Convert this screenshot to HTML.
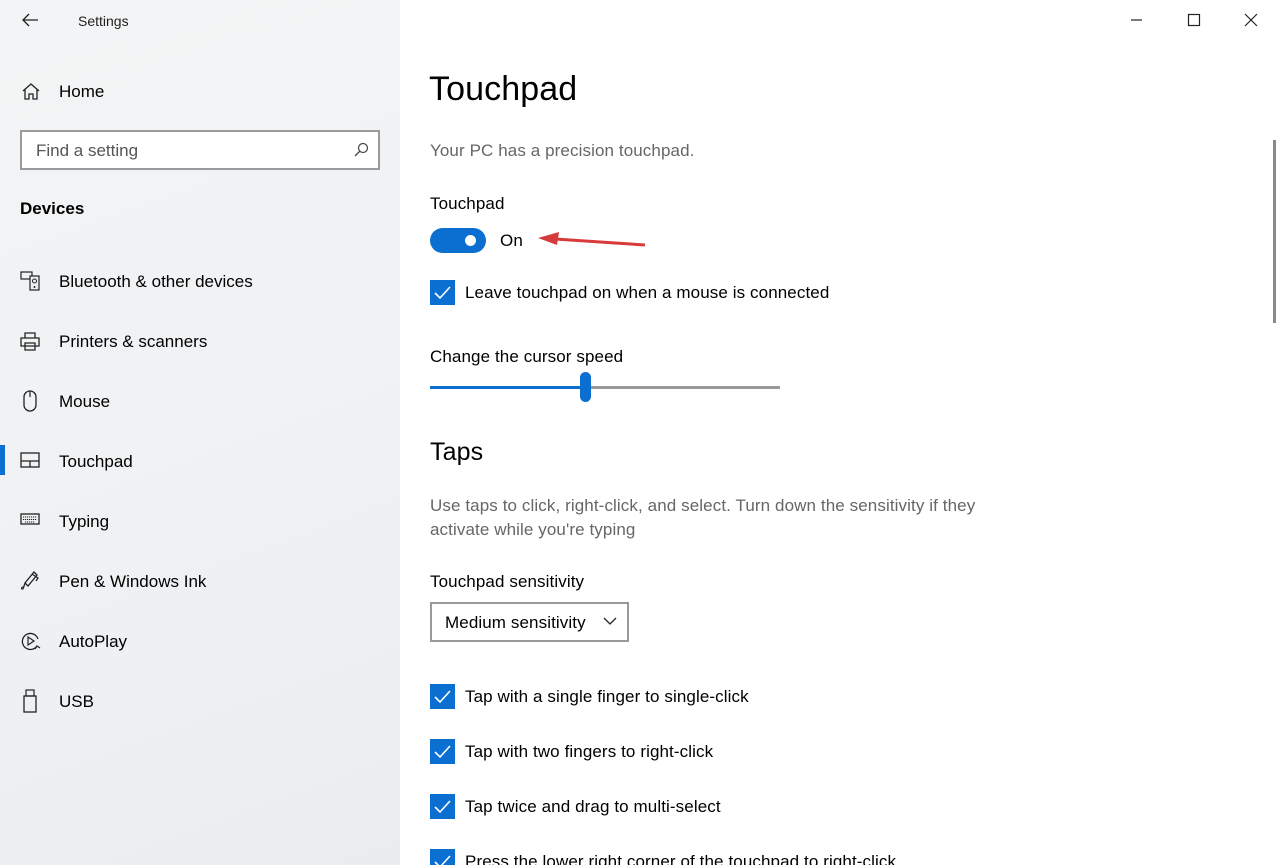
<!DOCTYPE html>
<html style="width:1280px;height:865px;overflow:hidden"><head><meta charset="utf-8"><style>
*{margin:0;padding:0;box-sizing:border-box}
body{width:1280px;height:865px;overflow:hidden;font-family:"Liberation Sans",sans-serif;color:#000;background:#fff;position:relative}
.side{position:absolute;left:0;top:0;width:400px;height:865px;background:linear-gradient(160deg,#f3f4f5 0%,#eff1f3 60%,#eaedf0 100%)}
.abs{position:absolute;white-space:nowrap}
.item{position:absolute;left:59px;font-size:17px}
.ic{position:absolute;left:20px}
.main .t{position:absolute;white-space:nowrap;font-size:17px;letter-spacing:0.1px}
.cb{position:absolute;left:430px;width:25px;height:25px;background:#0a6fd0}
.cb svg{position:absolute;left:3px;top:3px}
</style></head><body>
<div class="side">
<svg class="abs" style="left:21px;top:13px" width="18" height="14" viewBox="0 0 18 14"><path d="M8 1L2 7L8 13M2 7H17" stroke="#222" stroke-width="1.3" fill="none"/></svg>
<div class="abs" style="left:78px;top:13px;font-size:14px;color:#222">Settings</div>
<svg class="abs" style="left:21px;top:82px" width="20" height="19" viewBox="0 0 20 19"><path d="M2 9L10 2L18 9M4 7V17H8V12H12V17H16V7" stroke="#222" stroke-width="1.3" fill="none"/></svg>
<div class="abs" style="left:59px;top:82px;font-size:17px">Home</div>
<div class="abs" style="left:20px;top:130px;width:360px;height:40px;border:2px solid #9a9a9a;background:#fff"></div>
<div class="abs" style="left:36px;top:141px;font-size:17px;color:#555">Find a setting</div>
<svg class="abs" style="left:353px;top:142px" width="16" height="16" viewBox="0 0 16 16"><circle cx="10" cy="6" r="4.5" stroke="#444" fill="none" stroke-width="1.2"/><path d="M7 9L2 14" stroke="#444" stroke-width="1.3"/></svg>
<div class="abs" style="left:20px;top:199px;font-size:17px;font-weight:bold">Devices</div>

<svg class="ic" style="top:271px" width="21" height="20" viewBox="0 0 21 20"><rect x="1" y="1" width="11" height="7" fill="none" stroke="#222" stroke-width="1.2"/><rect x="10" y="5" width="9" height="14" fill="#f0f1f3" stroke="#222" stroke-width="1.2"/><circle cx="14.5" cy="10" r="2" fill="none" stroke="#222"/><circle cx="14.5" cy="16" r="1" fill="#222"/></svg>
<div class="item" style="top:272px">Bluetooth &amp; other devices</div>
<svg class="ic" style="top:331px" width="20" height="20" viewBox="0 0 20 20"><path d="M5 7V2H15V7M1 7H19V15H1ZM5 12H15V19H5Z" fill="none" stroke="#222" stroke-width="1.3"/></svg>
<div class="item" style="top:332px">Printers &amp; scanners</div>
<svg class="ic" style="top:390px" width="20" height="22" viewBox="0 0 20 22"><rect x="4" y="1" width="12" height="20" rx="6" fill="none" stroke="#222" stroke-width="1.3"/><path d="M10 1V7" stroke="#222" stroke-width="1.2"/></svg>
<div class="item" style="top:392px">Mouse</div>
<div class="abs" style="left:0;top:445px;width:5px;height:30px;background:#0a6fd0"></div>
<svg class="ic" style="top:452px" width="20" height="16" viewBox="0 0 20 16"><rect x="1" y="1" width="18" height="14" fill="none" stroke="#222" stroke-width="1.3"/><path d="M1 9H19M10 9V15" stroke="#222" stroke-width="1.3"/></svg>
<div class="item" style="top:452px">Touchpad</div>
<svg class="ic" style="top:513px" width="20" height="12" viewBox="0 0 20 12"><rect x="1" y="1" width="18" height="10" fill="none" stroke="#222" stroke-width="1.3"/><path d="M3 4H17M3 6.5H17M5 9H15" stroke="#222" stroke-dasharray="1.2 0.8"/></svg>
<div class="item" style="top:512px">Typing</div>
<svg class="ic" style="top:570px" width="20" height="22" viewBox="0 0 20 22"><path d="M14 2L17 5L8 16L5 13ZM5 13L3 19M12 4L18 8L16 11" fill="none" stroke="#222" stroke-width="1.3"/><path d="M3 19C1 20 1 17 3 17" fill="none" stroke="#222"/></svg>
<div class="item" style="top:572px">Pen &amp; Windows Ink</div>
<svg class="ic" style="top:631px" width="21" height="21" viewBox="0 0 21 21"><path d="M17 15A8 8 0 1 1 18 8" fill="none" stroke="#222" stroke-width="1.3"/><path d="M8 6L14 10L8 14Z" fill="none" stroke="#222" stroke-width="1.2"/><path d="M15 18L17 15L20 17" fill="none" stroke="#222" stroke-width="1.2"/></svg>
<div class="item" style="top:632px">AutoPlay</div>
<svg class="ic" style="left:23px;top:689px" width="14" height="24" viewBox="0 0 14 24"><rect x="1" y="7" width="12" height="16" fill="none" stroke="#222" stroke-width="1.3"/><rect x="3" y="1" width="8" height="6" fill="none" stroke="#222" stroke-width="1.2"/></svg>
<div class="item" style="top:692px">USB</div>
</div>

<div class="main">
<svg class="abs" style="left:1130px;top:13px" width="135" height="14" viewBox="0 0 135 14"><path d="M1 7H12" stroke="#222" stroke-width="1.2"/><rect x="58.5" y="1.5" width="11" height="11" fill="none" stroke="#222" stroke-width="1.2"/><path d="M115 1L127 13M127 1L115 13" stroke="#222" stroke-width="1.2"/></svg>
<div class="abs" style="left:1273px;top:140px;width:3px;height:183px;background:#8a8a8a"></div>
<div class="t" style="left:429px;top:70px;font-size:34px">Touchpad</div>
<div class="t" style="left:430px;top:141px;color:#666">Your PC has a precision touchpad.</div>
<div class="t" style="left:430px;top:194px">Touchpad</div>
<div class="abs" style="left:430px;top:228px;width:56px;height:25px;border-radius:13px;background:#0a6fd0"></div>
<div class="abs" style="left:465px;top:235px;width:11px;height:11px;border-radius:50%;background:#fff"></div>
<div class="t" style="left:500px;top:231px">On</div>
<svg class="abs" style="left:535px;top:230px" width="115" height="20" viewBox="0 0 115 20"><path d="M20 9L110 15" stroke="#d73a3a" stroke-width="3"/><path d="M3 8L24 2L22 15Z" fill="#d73a3a"/></svg>
<div class="cb" style="top:280px"><svg width="19" height="19" viewBox="0 0 19 19"><path d="M2 10L7 15L17 4" stroke="#fff" stroke-width="1.6" fill="none"/></svg></div>
<div class="t" style="left:465px;top:283px">Leave touchpad on when a mouse is connected</div>
<div class="t" style="left:430px;top:347px">Change the cursor speed</div>
<div class="abs" style="left:430px;top:386px;width:156px;height:3px;background:#0a6fd0"></div>
<div class="abs" style="left:586px;top:386px;width:194px;height:3px;background:#999"></div>
<div class="abs" style="left:580px;top:372px;width:11px;height:30px;border-radius:6px;background:#0a6fd0"></div>
<div class="t" style="left:430px;top:438px;font-size:25px">Taps</div>
<div class="t" style="left:430px;top:494px;color:#666;line-height:24px">Use taps to click, right-click, and select. Turn down the sensitivity if they<br>activate while you're typing</div>
<div class="t" style="left:430px;top:572px">Touchpad sensitivity</div>
<div class="abs" style="left:430px;top:602px;width:199px;height:40px;border:2px solid #999;background:#fff"></div>
<div class="t" style="left:445px;top:613px">Medium sensitivity</div>
<svg class="abs" style="left:603px;top:617px" width="14" height="9" viewBox="0 0 14 9"><path d="M1 1L7 7L13 1" stroke="#222" stroke-width="1.3" fill="none"/></svg>
<div class="cb" style="top:684px"><svg width="19" height="19" viewBox="0 0 19 19"><path d="M2 10L7 15L17 4" stroke="#fff" stroke-width="1.6" fill="none"/></svg></div>
<div class="t" style="left:465px;top:687px">Tap with a single finger to single-click</div>
<div class="cb" style="top:739px"><svg width="19" height="19" viewBox="0 0 19 19"><path d="M2 10L7 15L17 4" stroke="#fff" stroke-width="1.6" fill="none"/></svg></div>
<div class="t" style="left:465px;top:742px">Tap with two fingers to right-click</div>
<div class="cb" style="top:794px"><svg width="19" height="19" viewBox="0 0 19 19"><path d="M2 10L7 15L17 4" stroke="#fff" stroke-width="1.6" fill="none"/></svg></div>
<div class="t" style="left:465px;top:797px">Tap twice and drag to multi-select</div>
<div class="cb" style="top:849px"><svg width="19" height="19" viewBox="0 0 19 19"><path d="M2 10L7 15L17 4" stroke="#fff" stroke-width="1.6" fill="none"/></svg></div>
<div class="t" style="left:465px;top:852px">Press the lower right corner of the touchpad to right-click</div>
</div>
</body></html>
